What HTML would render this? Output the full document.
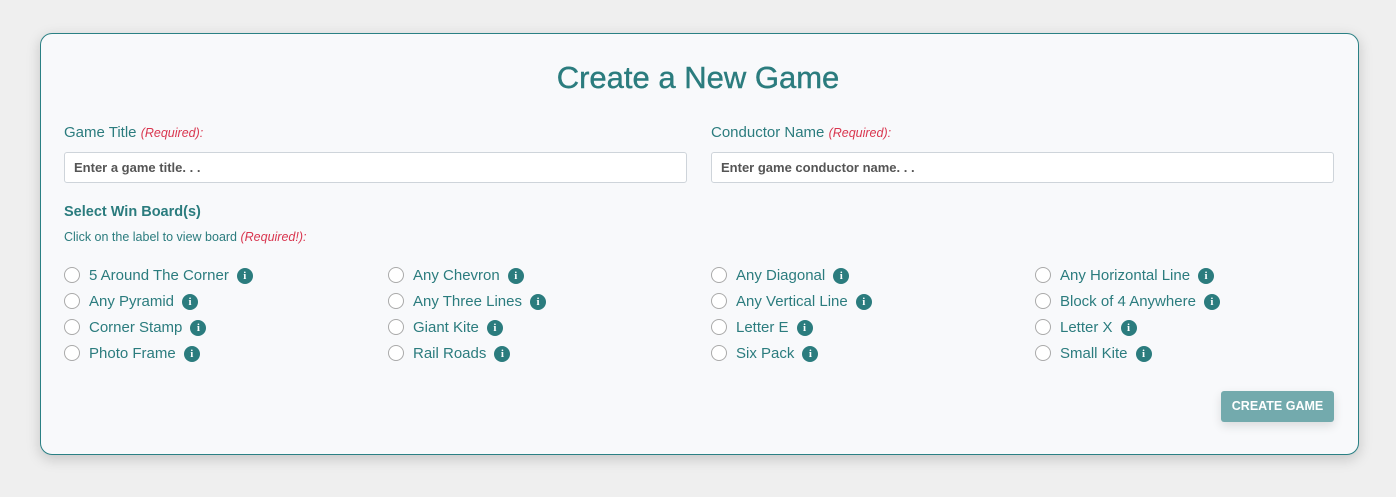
<!DOCTYPE html>
<html><head><style>
body{margin:0;background:#efefef;font-family:"Liberation Sans",sans-serif;width:1396px;height:497px;position:relative;overflow:hidden}
.card{position:absolute;left:40px;top:33px;width:1317px;height:420px;border:1px solid #2a8084;border-radius:12px;background:#f8f9fb;box-shadow:0 4px 14px rgba(0,0,0,.18)}
h1{position:absolute;left:0;right:0;top:58px;margin:0;text-align:center;font-size:31px;font-weight:normal;color:#2b7c7e;line-height:40px;-webkit-text-stroke:0.4px #2b7c7e}
.lbl{position:absolute;font-size:15px;color:#2b7c7e;top:124px}
.req{color:#d9364f;font-style:italic;font-size:12.5px}
.inp{position:absolute;top:152px;border:1px solid #ced4da;border-radius:3px;background:#fff;font-size:13px;font-weight:bold;color:#555;line-height:29px;padding-left:9px;box-sizing:border-box;width:623px;height:31px}
.opt{position:absolute;font-size:15px;color:#2b7c7e;height:20px;line-height:20px;white-space:nowrap}
.opt .r{display:inline-block;width:14px;height:14px;border:1px solid #aaa;border-radius:50%;background:#fff;vertical-align:-3px;margin-right:9px}
.opt .i{display:inline-block;width:16px;height:16px;border-radius:50%;background:#2b7c7e;color:#fff;font-size:11px;font-weight:bold;text-align:center;line-height:16px;margin-left:8px;font-family:"Liberation Serif",serif;position:relative;top:-2px;vertical-align:-1px}
.btn{position:absolute;left:1221px;top:391px;width:113px;height:31px;background:#73aaad;border-radius:3px;color:#fff;font-size:12.5px;font-weight:bold;text-align:center;line-height:31px;box-shadow:0 4px 10px rgba(0,0,0,.12)}
</style></head><body>
<div class="card"></div>
<h1>Create a New Game</h1>
<div class="lbl" style="left:64px">Game Title <span class="req">(Required):</span></div>
<div class="lbl" style="left:711px">Conductor Name <span class="req">(Required):</span></div>
<div class="inp" style="left:64px">Enter a game title. . .</div>
<div class="inp" style="left:711px">Enter game conductor name. . .</div>
<div style="position:absolute;left:64px;top:204px;font-size:14.5px;font-weight:bold;color:#2b7c7e">Select Win Board(s)</div>
<div style="position:absolute;left:64px;top:230px;font-size:12.5px;color:#2b7c7e">Click on the label to view board <span class="req">(Required!):</span></div>

<div class="opt" style="left:64px;top:266px"><span class="r"></span>5 Around The Corner<span class="i">i</span></div>
<div class="opt" style="left:64px;top:292px"><span class="r"></span>Any Pyramid<span class="i">i</span></div>
<div class="opt" style="left:64px;top:318px"><span class="r"></span>Corner Stamp<span class="i">i</span></div>
<div class="opt" style="left:64px;top:344px"><span class="r"></span>Photo Frame<span class="i">i</span></div>

<div class="opt" style="left:388px;top:266px"><span class="r"></span>Any Chevron<span class="i">i</span></div>
<div class="opt" style="left:388px;top:292px"><span class="r"></span>Any Three Lines<span class="i">i</span></div>
<div class="opt" style="left:388px;top:318px"><span class="r"></span>Giant Kite<span class="i">i</span></div>
<div class="opt" style="left:388px;top:344px"><span class="r"></span>Rail Roads<span class="i">i</span></div>

<div class="opt" style="left:711px;top:266px"><span class="r"></span>Any Diagonal<span class="i">i</span></div>
<div class="opt" style="left:711px;top:292px"><span class="r"></span>Any Vertical Line<span class="i">i</span></div>
<div class="opt" style="left:711px;top:318px"><span class="r"></span>Letter E<span class="i">i</span></div>
<div class="opt" style="left:711px;top:344px"><span class="r"></span>Six Pack<span class="i">i</span></div>

<div class="opt" style="left:1035px;top:266px"><span class="r"></span>Any Horizontal Line<span class="i">i</span></div>
<div class="opt" style="left:1035px;top:292px"><span class="r"></span>Block of 4 Anywhere<span class="i">i</span></div>
<div class="opt" style="left:1035px;top:318px"><span class="r"></span>Letter X<span class="i">i</span></div>
<div class="opt" style="left:1035px;top:344px"><span class="r"></span>Small Kite<span class="i">i</span></div>

<div class="btn">CREATE GAME</div>
</body></html>
